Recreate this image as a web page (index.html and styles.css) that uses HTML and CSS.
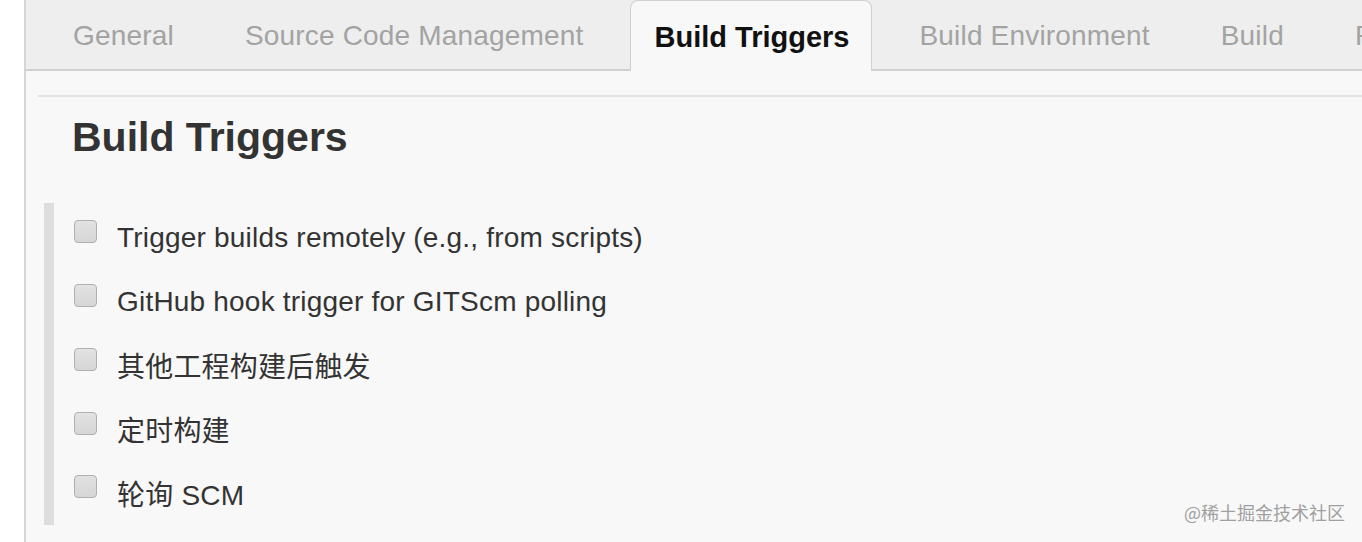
FILE: index.html
```html
<!DOCTYPE html>
<html>
<head>
<meta charset="utf-8">
<link rel="stylesheet" href="styles.css">
</head>
<body>
<div class="page">
  <div class="tabs">
    <div class="tab">General</div>
    <div class="tab">Source Code Management</div>
    <div class="tab active">Build Triggers</div>
    <div class="tab">Build Environment</div>
    <div class="tab">Build</div>
    <div class="tab">Post-build Actions</div>
  </div>
  <div class="content">
    <div class="section">
      <h1 class="heading">Build Triggers</h1>
      <div class="options">
        <label class="row"><span class="box"></span><span class="text">Trigger builds remotely (e.g., from scripts)</span></label>
        <label class="row"><span class="box"></span><span class="text">GitHub hook trigger for GITScm polling</span></label>
        <label class="row"><span class="box"></span><span class="text">其他工程构建后触发</span></label>
        <label class="row"><span class="box"></span><span class="text">定时构建</span></label>
        <label class="row"><span class="box"></span><span class="text">轮询 SCM</span></label>
      </div>
    </div>
  </div>
  <div class="watermark">@稀土掘金技术社区</div>
</div>
</body>
</html>
```

FILE: styles.css
```css
html, body {
  margin: 0;
  padding: 0;
  background: #ffffff;
  overflow: hidden;
}
body {
  font-family: "Liberation Sans", Arial, "Noto Sans CJK SC", sans-serif;
  color: #333333;
}
.page {
  position: relative;
  margin-left: 24px;
  height: 542px;
  border-left: 2px solid #d6d6d6;
  background: #f8f8f8;
  overflow: hidden;
}
.tabs {
  display: flex;
  height: 69px;
  background: #eeeeee;
  border-bottom: 2px solid #d0d0d0;
  padding-left: 24px;
  white-space: nowrap;
}
.tab {
  flex: none;
  height: 69px;
  line-height: 72px;
  padding: 0 23px;
  margin-right: 25px;
  font-size: 28px;
  letter-spacing: 0.18px;
  color: #a3a3a3;
  box-sizing: border-box;
}
.tab.active {
  height: 71px;
  margin-bottom: -2px;
  background: #f8f8f8;
  border: 1px solid #d0d0d0;
  border-bottom: none;
  border-radius: 8px 8px 0 0;
  color: #111111;
  font-weight: bold;
  font-size: 29px;
  letter-spacing: 0;
  padding: 0 22px 0 23px;
  margin-left: -1px;
  margin-right: 24px;
}
.content {
  padding: 24px 0 0 12px;
}
.section {
  border-top: 2px solid #e2e2e2;
}
.heading {
  margin: 0;
  padding: 17px 0 0 34px;
  font-size: 41px;
  line-height: 46px;
  font-weight: bold;
  color: #333333;
}
.options {
  margin: 43px 0 0 6px;
  border-left: 10px solid #dddddd;
  padding: 3px 0 0 20px;
  width: 1200px;
}
.row {
  display: flex;
  align-items: center;
  height: 63.75px;
  cursor: pointer;
}
.box {
  flex: none;
  width: 21px;
  height: 21px;
  border: 1px solid #b0b0b0;
  border-radius: 4px;
  background: linear-gradient(#e2e2e2, #d6d6d6);
  margin-right: 20px;
  position: relative;
  top: -6px;
}
.text {
  font-size: 28px;
  color: #333333;
  letter-spacing: 0.2px;
}
.watermark {
  position: absolute;
  right: 17px;
  bottom: 17px;
  font-size: 18px;
  color: #a0a0a0;
  font-family: "Noto Sans CJK SC", sans-serif;
}
```
